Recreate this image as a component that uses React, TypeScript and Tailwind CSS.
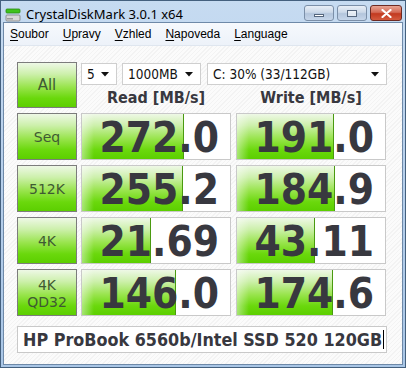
import React from "react";

type Row = {
  label: string[];
  read: string;
  readBar: number;
  write: string;
  writeBar: number;
};

const rows: Row[] = [
  { label: ["Seq"], read: "272.0", readBar: 102, write: "191.0", writeBar: 97 },
  { label: ["512K"], read: "255.2", readBar: 101, write: "184.9", writeBar: 98 },
  { label: ["4K"], read: "21.69", readBar: 69, write: "43.11", writeBar: 78 },
  { label: ["4K", "QD32"], read: "146.0", readBar: 94, write: "174.6", writeBar: 96 },
];

const greenGrad =
  "bg-[linear-gradient(to_bottom,#eef8e6_0%,#cdf0ac_25%,#98e44c_55%,#6ad80c_80%,#5ccf00_100%)]";

const numFont = { fontFamily: "'DejaVu Sans Condensed', 'DejaVu Sans', sans-serif" };
const uiFont = { fontFamily: "'Liberation Sans', sans-serif" };

const LabelButton: React.FC<{ lines: string[] }> = ({ lines }) => (
  <div
    className={`w-[60px] h-[47px] border border-[#7c7c7c] ${greenGrad} flex flex-col items-center justify-center pt-[2px] text-[#3f5a33] text-[14px] leading-[17px]`}
    style={{ fontFamily: "'DejaVu Sans', sans-serif" }}
  >
    {lines.map((l) => (
      <span key={l}>{l}</span>
    ))}
  </div>
);

const ValueBox: React.FC<{ value: string; bar: number }> = ({ value, bar }) => (
  <div className="relative w-[150px] h-[47px] bg-white border border-[#c9c9c9]">
    <div
      className={`absolute left-0 top-0 bottom-0 ${greenGrad} border-r border-[#4a9a10]`}
      style={{ width: bar }}
    >
      <div className="absolute left-0 top-0 bottom-0 w-[12px] bg-[linear-gradient(to_right,rgba(255,255,255,0.45),rgba(255,255,255,0))]" />
    </div>
    <div
      className="relative h-full flex items-center justify-end pr-[11px] pt-[3px] text-[42px] font-bold text-[#38383f] leading-none"
      style={numFont}
    >
      {value}
    </div>
  </div>
);

const Select: React.FC<{ text: string; w: string }> = ({ text, w }) => (
  <div
    className={`${w} h-[22px] bg-white border border-[#cfcfcf] flex items-center justify-between pl-[5px] pr-[7px] text-[13.5px] text-[#111]`}
    style={numFont}
  >
    <span>{text}</span>
    <svg width="8" height="5" viewBox="0 0 8 5">
      <path d="M0 0 H8 L4 4.5 Z" fill="#111" />
    </svg>
  </div>
);

const DriveIcon = () => (
  <svg width="16" height="16" viewBox="0 0 16 16">
    <rect x="1" y="2" width="14" height="4" rx="1" fill="#3fc21c" stroke="#2a8a12" strokeWidth="0.8" />
    <rect x="1" y="8" width="14" height="6" rx="1" fill="#d8d8d8" stroke="#7d7d7d" strokeWidth="0.8" />
    <rect x="2" y="11" width="6" height="1.5" fill="#9a9a9a" />
  </svg>
);

const CaptionButton: React.FC<{ kind: "min" | "max" | "close" }> = ({ kind }) => {
  if (kind === "close") {
    return (
      <div className="w-[32px] h-[16px] rounded-[3px] border border-[#6d2a22] bg-[linear-gradient(to_bottom,#e8a493_0%,#d46a55_45%,#c2391f_55%,#d45a3e_100%)] flex items-center justify-center">
        <svg width="11" height="9" viewBox="0 0 11 9">
          <path d="M1.5 1 L9.5 8 M9.5 1 L1.5 8" stroke="#fff" strokeWidth="2.2" strokeLinecap="round" />
        </svg>
      </div>
    );
  }
  return (
    <div className="w-[30px] h-[16px] rounded-[3px] border border-[#7b8fa8] bg-[linear-gradient(to_bottom,#e8eef6_0%,#cbd8e8_45%,#b3c5dc_55%,#c6d6ea_100%)] flex items-center justify-center">
      {kind === "min" ? (
        <div className="w-[10px] h-[3px] mt-[5px] bg-white border border-[#55667d]" />
      ) : (
        <div className="w-[10px] h-[7px] border-[1.5px] border-[#55667d] bg-white/60" />
      )}
    </div>
  );
};

const menu = [
  ["S", "oubor"],
  ["U", "pravy"],
  ["V", "zhled"],
  ["N", "apoveda"],
  ["L", "anguage"],
];

export default function App() {
  return (
    <div className="w-[406px] h-[368px] flex flex-col bg-[linear-gradient(to_bottom,#c6dbf1_0%,#b9d1ec_40%,#a9c6e6_100%)] border border-[#44607e] overflow-hidden">
      {/* title bar */}
      <div className="h-[21px] flex items-start shrink-0">
        <div className="flex items-center gap-[5px] pl-[4px] pt-[4px]">
          <DriveIcon />
          <span className="text-[13px] text-black" style={{ fontFamily: "'Noto Sans', sans-serif" }}>
            CrystalDiskMark 3.0.1 x64
          </span>
        </div>
        <div className="ml-auto flex gap-[3px] pr-[3px] pt-[4px]">
          <CaptionButton kind="min" />
          <CaptionButton kind="max" />
          <CaptionButton kind="close" />
        </div>
      </div>

      {/* client */}
      <div className="flex-1 mx-[2px] mb-[2px] border border-[#6e89a8] flex flex-col bg-white">
        <div
          className="h-[23px] shrink-0 flex items-center gap-[14px] pl-[6px] text-[12px] text-black bg-[linear-gradient(to_bottom,#f6f9fd_0%,#edf2f9_100%)] border-b border-[#dfe6ef]"
          style={uiFont}
        >
          {menu.map(([u, rest]) => (
            <span key={u + rest}>
              <span className="underline underline-offset-2">{u}</span>
              {rest}
            </span>
          ))}
        </div>

        <div className="flex-1 pl-[13px] pt-[16px] bg-[repeating-linear-gradient(135deg,#f3f3f3_0px,#f3f3f3_1px,#fbfbfb_1px,#fbfbfb_3px)]">
          {/* header */}
          <div className="flex h-[45px]">
            <div
              className={`w-[60px] h-[46px] border border-[#7c7c7c] ${greenGrad} flex items-center justify-center text-[15px] text-[#3f5a33]`}
              style={{ fontFamily: "'DejaVu Sans', sans-serif" }}
            >
              All
            </div>
            <div className="ml-[4px] flex flex-col">
              <div className="flex mt-[1px]">
                <Select text="5" w="w-[36px]" />
                <div className="ml-[5px]">
                  <Select text="1000MB" w="w-[79px]" />
                </div>
                <div className="ml-[6px]">
                  <Select text="C: 30% (33/112GB)" w="w-[180px]" />
                </div>
              </div>
              <div
                className="flex h-[22px] mt-[2px] items-center text-[16px] leading-[22px] font-bold text-[#38383f]"
                style={numFont}
              >
                <div className="w-[150px] text-center">Read [MB/s]</div>
                <div className="w-[150px] ml-[5px] text-center">Write [MB/s]</div>
              </div>
            </div>
          </div>

          {/* rows */}
          <div className="flex flex-col gap-[5px] mt-[6px]">
            {rows.map((r) => (
              <div key={r.label.join()} className="flex">
                <LabelButton lines={r.label} />
                <div className="ml-[4px]">
                  <ValueBox value={r.read} bar={r.readBar} />
                </div>
                <div className="ml-[5px]">
                  <ValueBox value={r.write} bar={r.writeBar} />
                </div>
              </div>
            ))}
          </div>

          {/* comment box */}
          <div className="mt-[10px] w-[370px] h-[27px] bg-white border border-[#c9c9c9] flex items-center pl-[5px]">
            <span
              className="whitespace-nowrap text-[17.8px] font-bold text-[#38383f] leading-none"
              style={numFont}
            >
              HP ProBook 6560b/Intel SSD 520 120GB
            </span>
            <span className="w-[1px] h-[19px] bg-black ml-[1px]" />
          </div>
        </div>
      </div>
    </div>
  );
}
